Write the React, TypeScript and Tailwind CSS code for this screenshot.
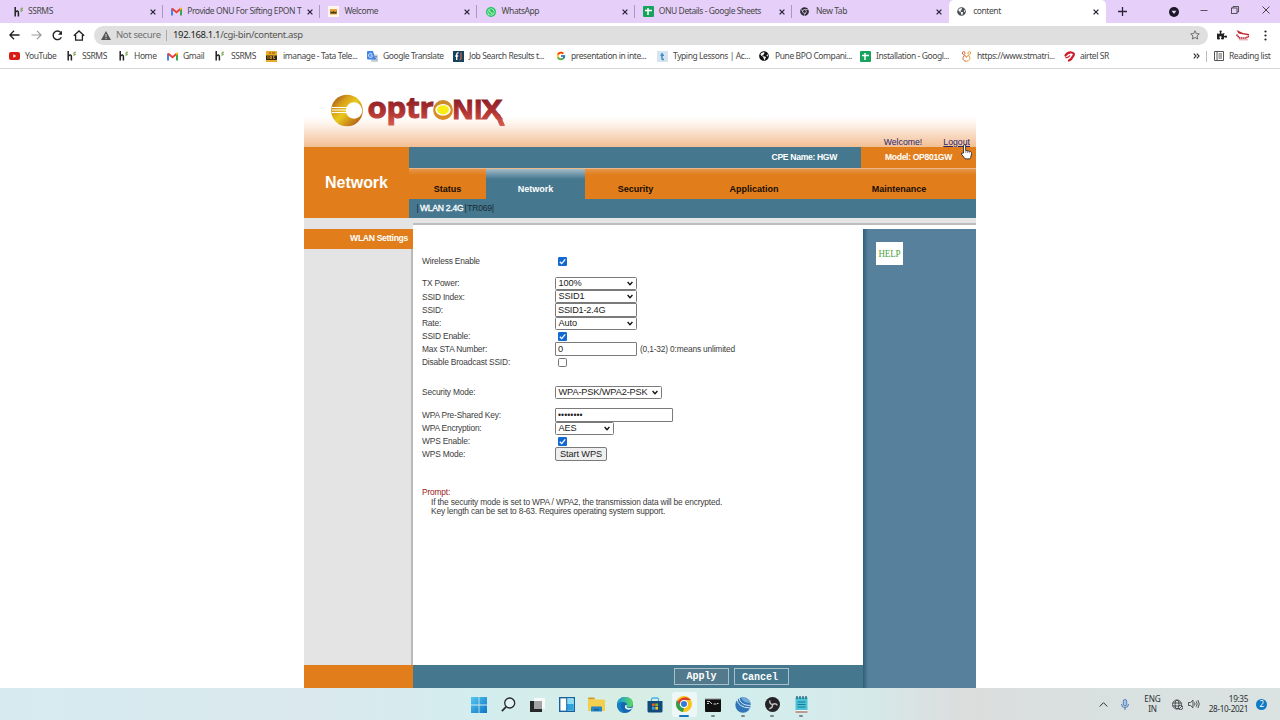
import React from "react";
import { FcGoogle } from "react-icons/fc";
import { FaChrome, FaWhatsapp, FaPuzzlePiece, FaGlobeAmericas } from "react-icons/fa";

type P = { className?: string };

const Hs = () => (
  <svg width="10" height="10" viewBox="0 0 10 10">
    <path d="M1.200 0v9.500M1.500 5q2.700-2.300 2.900.5v4" fill="none" stroke="#222" strokeWidth="1.500" />
    <path d="M9 1.200q-2.300-.4-2.200.9t1.700.9q0 1.600-2.300 1" fill="none" stroke="#6a9a3c" strokeWidth="1" />
  </svg>
);
const Gmail = () => (
  <svg width="11" height="9" viewBox="0 0 11 9">
    <path d="M1 8.500V1.500" stroke="#4285f4" strokeWidth="2" />
    <path d="M10 8.500V1.500" stroke="#34a853" strokeWidth="2" />
    <path d="M1 1.500l4.500 3.800L10 1.500" fill="none" stroke="#ea4335" strokeWidth="2" />
    <path d="M9 1v2.500L11 2V.5z" fill="#fbbc04" />
  </svg>
);
const Imanage = () => (
  <svg width="11" height="11" viewBox="0 0 11 11">
    <rect width="11" height="11" fill="#e8ab2c" />
    <path d="M0 4.500h11v4.500H0z" fill="#33270f" />
    <path d="M3 1h2v2H3zM6 1h3v2H6z" fill="#b57f18" />
    <path d="M2 5v3M4 5.500h1.500v2H4zM9 5H7.500v2.500H9" stroke="#e8ab2c" strokeWidth=".8" fill="none" />
  </svg>
);
const Sheet = () => (
  <svg width="11" height="11" viewBox="0 0 11 11">
    <rect width="11" height="11" rx="1" fill="#17a35b" />
    <path d="M2 4.500h7M5 2v7" stroke="#fff" strokeWidth="1.500" />
  </svg>
);
const Welcome = () => (
  <svg width="11" height="11" viewBox="0 0 11 11">
    <rect width="11" height="11" fill="#fff8ea" />
    <rect x="2" y="3" width="7" height="5.500" fill="#dfa23c" />
    <path d="M2.500 7.500h6V5l-1.500 1.200L5.500 5 4 6.200 2.500 5z" fill="#49330f" />
  </svg>
);
const Whats = () => (
  <span className="flex h-[10px] w-[10px] items-center justify-center rounded-full bg-[#22c55e] text-white">
    <FaWhatsapp size={8} />
  </span>
);
const YouTube = () => (
  <svg width="11" height="8" viewBox="0 0 11 8">
    <rect width="11" height="8" rx="2" fill="#d81a16" />
    <path d="M4.300 2.200v3.600l3-1.800z" fill="#fff" />
  </svg>
);
const Translate = () => (
  <svg width="11" height="11" viewBox="0 0 11 11">
    <rect x="4" y="3.500" width="7" height="7.500" rx="1" fill="#c9d1dc" />
    <path d="M0 1q0-1 1-1h5l2.500 8.500H1q-1 0-1-1z" fill="#4285e8" />
    <path d="M5.700 4.200H3.700M5 3A2 2 0 1 0 5.500 5" fill="none" stroke="#fff" strokeWidth=".8" />
    <path d="M7.500 5.500H10M9.500 5.500L7.500 9M7.700 6.500L9.800 9" stroke="#5f7ba8" strokeWidth=".7" />
  </svg>
);
const JobIcon = () => (
  <svg width="11" height="11" viewBox="0 0 11 11">
    <rect width="11" height="11" fill="#17425e" />
    <path d="M5.500 2Q3.700 1.500 3.700 3.500V9M2.200 5h3" fill="none" stroke="#fff" strokeWidth="1.300" />
    <path d="M8 1.500v6q0 1.500-1.700 1.500" fill="none" stroke="#d7674b" strokeWidth="1.200" />
  </svg>
);
const Typing = () => (
  <svg width="11" height="11" viewBox="0 0 11 11">
    <rect width="11" height="11" fill="#d5e4f0" />
    <path d="M5 2v5.500q0 1.200 2 .9M3.500 4.200h3.500" fill="none" stroke="#3e8dbe" strokeWidth="1.500" />
  </svg>
);
const Stm = () => (
  <svg width="11" height="11" viewBox="0 0 11 11" fill="none" strokeWidth="1">
    <circle cx="2.700" cy="2" r="1.400" stroke="#d8694d" />
    <circle cx="8.300" cy="2" r="1.400" stroke="#e2a23a" />
    <path d="M3 4.500Q.2 9.500 5 10.300M3 4.500q2.500 0 2.500 2" stroke="#d8694d" />
    <path d="M8 4.500q3 5-3 5.800M8 4.500q-2.500 0-2.500 2" stroke="#e2a23a" />
  </svg>
);
const Airtel = () => (
  <svg width="11" height="11" viewBox="0 0 11 11">
    <path d="M1.500 4.500Q3.500 1 7.500 1.500T8.800 5.500Q7.500 8.500 5 9.500" fill="none" stroke="#cf1b2c" strokeWidth="2.200" strokeLinecap="round" />
    <path d="M1.500 6.500q3 .5 4.500-2" fill="none" stroke="#cf1b2c" strokeWidth="1.300" />
  </svg>
);
const Cross = ({ className = "" }: P) => (
  <svg className={"shrink-0 " + className} width="6" height="6" viewBox="0 0 6 6">
    <path d="M.6.6l4.800 4.800M5.400.6L.6 5.400" stroke="#2b2438" strokeWidth="1.300" />
  </svg>
);

const tabs = [
  { icon: <Hs />, label: "SSRMS" },
  { icon: <Gmail />, label: "Provide ONU For Sifting EPON T" },
  { icon: <Welcome />, label: "Welcome" },
  { icon: <Whats />, label: "WhatsApp" },
  { icon: <Sheet />, label: "ONU Details - Google Sheets" },
  { icon: <FaChrome size={9} color="#2c2c34" />, label: "New Tab" },
  { icon: <FaGlobeAmericas size={9} color="#4b5157" />, label: "content" },
];

const bookmarks = [
  { icon: <YouTube />, label: "YouTube", w: "w-[58px]", g: "w-[16px]" },
  { icon: <Hs />, label: "SSRMS", w: "w-[52px]", g: "w-[15px]" },
  { icon: <Hs />, label: "Home", w: "w-[48px]", g: "w-[15px]" },
  { icon: <Gmail />, label: "Gmail", w: "w-[48px]", g: "w-[16px]" },
  { icon: <Hs />, label: "SSRMS", w: "w-[51px]", g: "w-[16px]" },
  { icon: <Imanage />, label: "imanage - Tata Tele...", w: "w-[101px]", g: "w-[17px]" },
  { icon: <Translate />, label: "Google Translate", w: "w-[86px]", g: "w-[16px]" },
  { icon: <JobIcon />, label: "Job Search Results t...", w: "w-[103px]", g: "w-[16px]" },
  { icon: <FcGoogle size={10} />, label: "presentation in inte...", w: "w-[101px]", g: "w-[15px]" },
  { icon: <Typing />, label: "Typing Lessons | Ac...", w: "w-[102px]", g: "w-[16px]" },
  { icon: <FaGlobeAmericas size={10} color="#111" />, label: "Pune BPO Compani...", w: "w-[101px]", g: "w-[16px]" },
  { icon: <Sheet />, label: "Installation - Googl...", w: "w-[101px]", g: "w-[16px]" },
  { icon: <Stm />, label: "https://www.stmatri...", w: "w-[103px]", g: "w-[16px]" },
  { icon: <Airtel />, label: "airtel SR", w: "w-[131px]", g: "w-[16px]" },
];

function Browser() {
  return (
    <header className="h-[69px] border-b border-[#d8d8da] bg-white font-['Noto_Sans',sans-serif] text-[8.500px] tracking-[-0.42px] text-[#484848]">
      <div className="flex h-[23px] bg-[#e6d0fa] pl-[6px]">
        {tabs.map((t, i) => (
          <div
            key={t.label}
            className={
              "flex w-[157.200px] shrink-0 items-center pl-[8px] " +
              (i === 6 ? "rounded-t-[5px] bg-white" : "")
            }
          >
            <span className="flex w-[15px] shrink-0">{t.icon}</span>
            <span className={"w-[116px] shrink-0 whitespace-nowrap " + (i === 0 ? "-ml-px mr-px" : "pl-[1px]")}>{t.label}</span>
            <Cross className="ml-[5px]" />
            {i < 5 && <span className="ml-[6px] h-[13px] w-px bg-[#a999bb]" />}
          </div>
        ))}
        <div className="flex flex-1 items-center">
          <svg className="ml-[12px]" width="9" height="9" viewBox="0 0 9 9"><path d="M4.500 0v9M0 4.500h9" stroke="#2b2438" strokeWidth="1.300" /></svg>
          <svg className="ml-[42px]" width="10" height="10" viewBox="0 0 10 10"><circle cx="5" cy="5" r="5" fill="#1d1827" /><path d="M2.500 3.800h5L5 7z" fill="#e6d0fa" /></svg>
          <svg className="mb-[4px] ml-[21px]" width="8" height="8" viewBox="0 0 8 8"><path d="M.5 4.500h7" stroke="#333" strokeWidth=".8" /></svg>
          <svg className="mb-[4px] ml-[23px]" width="8" height="8" viewBox="0 0 8 8" fill="none" stroke="#333" strokeWidth=".8"><rect x=".5" y="2" width="5.500" height="5.500" /><path d="M2 2V.5h5.500V6H6" /></svg>
          <svg className="mb-[4px] ml-[23px]" width="8" height="8" viewBox="0 0 8 8"><path d="M.5.5l7 7M7.500.5l-7 7" stroke="#333" strokeWidth=".9" /></svg>
        </div>
      </div>
      <div className="flex h-[23px] items-center pt-[1px]">
        <svg className="ml-[9px]" width="11" height="10" viewBox="0 0 11 10"><path d="M5 .8L.9 5 5 9.200M1 5h9.500" fill="none" stroke="#222" strokeWidth="1.300" /></svg>
        <svg className="ml-[11px]" width="11" height="10" viewBox="0 0 11 10"><path d="M6 .8L10.100 5 6 9.200M10 5H.5" fill="none" stroke="#999" strokeWidth="1.200" /></svg>
        <svg className="ml-[10px]" width="11" height="11" viewBox="0 0 11 11"><path d="M9.300 7.300A4.300 4.300 0 1 1 8.700 2.500" fill="none" stroke="#222" strokeWidth="1.400" /><path d="M10 .8v4H6z" fill="#222" /></svg>
        <svg className="ml-[10px]" width="12" height="11" viewBox="0 0 12 11"><path d="M.8 5.700L6 .9l5.200 4.800M2.600 5v5.200h6.800V5" fill="none" stroke="#222" strokeWidth="1.300" /></svg>
        <div className="ml-[9px] flex h-[19px] w-[1114px] items-center rounded-full bg-[#dfdfdf] text-[9.500px] tracking-[-0.360px]">
          <svg className="ml-[7px]" width="10" height="9" viewBox="0 0 10 9"><path d="M5 0l5 9H0z" fill="#555" /><path d="M5 3v3M5 6.800v1.200" stroke="#dfdfdf" /></svg>
          <span className="ml-[5px] w-[50px] whitespace-nowrap text-[#707070]">Not secure</span>
          <span className="h-[11px] w-px bg-[#aaa]" />
          <span className="ml-[6px] flex-1 whitespace-nowrap text-[#555]"><span className="text-[#222]">192.168.1.1</span>/cgi-bin/content.asp</span>
          <svg className="mr-[8px]" width="10" height="10" viewBox="0 0 10 10"><path d="M5 .8l1.300 2.800 3 .3L7 6l.7 3L5 7.500 2.300 9 3 6 .7 3.900l3-.3z" fill="none" stroke="#555" strokeWidth=".8" /></svg>
        </div>
        <FaPuzzlePiece className="ml-[9px]" size={10} color="#222" />
        <svg className="ml-[9px]" width="14" height="12" viewBox="0 0 14 12"><path d="M.5 1l2 3.500L13 6.500V5L7 4z" fill="#c4262e" /><path d="M.5 5.500l3 3.500h6l3.500-1.800" fill="none" stroke="#b72531" strokeWidth="1.700" strokeDasharray="1.500 .4" /><path d="M3 10.800h9" stroke="#d98d8d" strokeWidth=".9" /></svg>
        <svg className="ml-[14px]" width="3" height="11" viewBox="0 0 3 11" fill="#222"><circle cx="1.500" cy="1.500" r="1.100" /><circle cx="1.500" cy="5.500" r="1.100" /><circle cx="1.500" cy="9.500" r="1.100" /></svg>
      </div>
      <div className="flex h-[20px] items-center pl-[9px]">
        {bookmarks.map((b, i) => (
          <div key={i} className={"flex shrink-0 items-center " + b.w}>
            <span className={"flex shrink-0 " + b.g}>{b.icon}</span>
            <span className="whitespace-nowrap">{b.label}</span>
          </div>
        ))}
        <svg className="-ml-[2px] shrink-0" width="7" height="6" viewBox="0 0 7 6"><path d="M.8.6L3 3 .8 5.400M3.800.6L6 3 3.800 5.400" fill="none" stroke="#222" strokeWidth="1.100" /></svg>
        <span className="ml-[6px] h-[11px] w-px bg-[#bbb]" />
        <svg className="ml-[7px] shrink-0" width="10" height="10" viewBox="0 0 10 10"><path d="M.5.5h9v9h-9zM3 .5v9M4.500 3H8M4.500 5H8M4.500 7H8" fill="none" stroke="#444" strokeWidth=".9" /></svg>
        <span className="ml-[5px] whitespace-nowrap">Reading list</span>
      </div>
    </header>
  );
}

function Logo() {
  return (
    <svg className="overflow-visible" width="180" height="40" viewBox="328 90 180 40">
      <defs>
        <linearGradient id="coin" x1="0" y1="0" x2="1" y2="1">
          <stop offset="0" stopColor="#8c3d14" /><stop offset=".3" stopColor="#d9a01c" /><stop offset=".5" stopColor="#e8c81c" /><stop offset=".75" stopColor="#c98418" /><stop offset="1" stopColor="#9a3c14" />
        </linearGradient>
        <linearGradient id="red" gradientUnits="userSpaceOnUse" x1="0" y1="97" x2="0" y2="127">
          <stop offset="0" stopColor="#861a24" /><stop offset=".5" stopColor="#b03433" /><stop offset="1" stopColor="#d9604e" />
        </linearGradient>
        <linearGradient id="gold" x1="0" y1="0" x2="0" y2="1">
          <stop offset="0" stopColor="#c98b2a" /><stop offset="1" stopColor="#e08a25" />
        </linearGradient>
      </defs>
      <circle cx="347" cy="110.500" r="15.800" fill="url(#coin)" />
      <circle cx="354" cy="110.500" r="8.200" fill="#fff" />
      <path d="M332 107.500h15M332 110h15M332 112.500h15" stroke="#fff" strokeWidth="1" />
      <g fill="url(#red)" stroke="url(#red)" strokeWidth="1" fontFamily="'Open Sans',sans-serif" fontWeight="700">
        <text x="367.500" y="118" fontSize="28.500" textLength="66" lengthAdjust="spacingAndGlyphs">optr</text>
        <text x="452" y="118.500" fontSize="26" textLength="30.500" lengthAdjust="spacingAndGlyphs">NI</text>
        <text x="481.500" y="118.500" fontSize="26" textLength="20.500" lengthAdjust="spacingAndGlyphs">X</text>
        <path d="M495 113l5 12.500h4.500l-5-11z" />
      </g>
      <ellipse cx="443" cy="110" rx="9.900" ry="10" fill="url(#gold)" />
      <ellipse cx="443" cy="109.800" rx="7.700" ry="5.900" fill="#fff" />
      <ellipse cx="443" cy="109.800" rx="6" ry="4.600" fill="#f8ee13" />
    </svg>
  );
}

function Select({ value, w }: { value: string; w: string }) {
  return (
    <div className={"grid items-center rounded-[1.500px] border border-[#7b7b7b] bg-white h-[13px] " + w}>
      <span className="col-start-1 row-start-1 whitespace-nowrap pl-[2.500px] text-[9.200px] leading-[11px] tracking-[-0.120px] text-[#222]">{value}</span>
      <svg className="col-start-1 row-start-1 mr-[3px] justify-self-end" width="6" height="5" viewBox="0 0 6 5"><path d="M.6 1L3 3.600 5.400 1" fill="none" stroke="#111" strokeWidth="1.400" /></svg>
    </div>
  );
}
function Field({ value, w, small = false }: { value: string; w: string; small?: boolean }) {
  return (
    <input
      readOnly
      value={value}
      className={"h-[14px] rounded-[1px] border border-[#7b7b7b] bg-white px-[2px] text-[#222] outline-none " + w + (small ? " text-[8.500px] tracking-[0.100px]" : " text-[9.200px] tracking-[-0.220px]")}
    />
  );
}
function Check({ on = true }: { on?: boolean }) {
  return (
    <svg className="ml-[3px]" width="9" height="9" viewBox="0 0 9 9">
      {on ? (
        <>
          <rect width="9" height="9" rx="1.300" fill="#1268d3" />
          <path d="M1.800 4.700l1.900 1.900L7.200 2.300" fill="none" stroke="#fff" strokeWidth="1.300" />
        </>
      ) : (
        <rect x=".5" y=".5" width="8" height="8" rx="1.300" fill="#fff" stroke="#767676" />
      )}
    </svg>
  );
}
function Row({ label, children }: { label: string; children: React.ReactNode }) {
  return (
    <div className="flex h-[13.150px] items-center whitespace-nowrap">
      <span className="w-[133px] shrink-0">{label}</span>
      {children}
    </div>
  );
}

function Router() {
  return (
    <main className="mx-auto h-[619px] w-[672px] font-['Liberation_Sans',sans-serif] text-[8.400px] tracking-[-0.180px] text-[#3c3c3c]">
      <div className="flex h-[78px] justify-between bg-[linear-gradient(to_bottom,#fff_0px,#fff_48px,#fdf1e8_56px,#f2bf93_78px)]">
        <div className="pl-[24px] pt-[21px]"><Logo /></div>
        <div className="flex items-end pr-[6px] text-[8.700px] leading-[10px] tracking-[0.020px] text-[#26266e]">
          <span className="mr-[21px]">Welcome!</span>
          <span className="underline">Logout</span>
        </div>
      </div>
      <div className="flex h-[71px]">
        <div className="flex w-[105px] shrink-0 items-center justify-center bg-[#e17e1b] text-[16px] font-bold tracking-[-0.050px] text-white">Network</div>
        <div className="flex-1">
          <div className="flex h-[21px] text-[8.600px] font-bold tracking-[-0.330px] text-white">
            <div className="flex w-[452px] items-center justify-end bg-[#45788f] pr-[24px]">CPE Name: HGW</div>
            <div className="flex flex-1 items-center bg-[#e17e1b] pl-[24px]">Model: OP801GW</div>
          </div>
          <div className="flex h-[31px] border-t border-[#e9b98c] bg-[linear-gradient(to_bottom,#e8954a,#e17e1b_6px)] text-[9px] font-bold leading-[10px] tracking-[0.020px] text-[#160d04]">
            <div className="w-[77px] pt-[15px] text-center">Status</div>
            <div className="w-[99px] bg-[linear-gradient(to_bottom,#a5bdc9,#45788f_10px)] pt-[15px] text-center text-white">Network</div>
            <div className="w-[101px] pt-[15px] text-center">Security</div>
            <div className="w-[136px] pt-[15px] text-center">Application</div>
            <div className="w-[154px] pt-[15px] text-center">Maintenance</div>
          </div>
          <div className="flex h-[19px] items-center bg-[#45788f] pl-[7.500px] text-[8.600px] tracking-[-0.270px] text-[#1b2b33]">
            <span>|</span><span className="pl-[1.500px] text-white [-webkit-text-stroke:0.300px_white]">WLAN 2.4G</span><span className="pl-px">|</span><span className="pl-px">TR069</span><span>|</span>
          </div>
        </div>
      </div>
      <div className="flex h-[470px]">
        <aside className="flex w-[109px] shrink-0 flex-col bg-[#e4e4e4]">
          <div className="mt-[11px] flex h-[20px] items-center justify-end bg-[#e17e1b] pb-[2px] pr-[5px] text-[8.600px] font-bold tracking-[-0.320px] text-white">WLAN Settings</div>
          <div className="flex-1 border-r-2 border-[#b9b9b9]" />
          <div className="h-[23px] bg-[#e17e1b]" />
        </aside>
        <div className="flex flex-1 flex-col">
          <div className="h-[7px] border-b-2 border-[#bdbdbd] bg-[#e4e4e4]" />
          <div className="flex flex-1">
            <div className="flex w-[450px] flex-col">
              <div className="flex-1 bg-white pl-[9px] pt-[30px]">
                <Row label="Wireless Enable"><Check /></Row>
                <div className="mt-[9px]">
                  <Row label="TX Power:"><Select value="100%" w="w-[82px]" /></Row>
                  <Row label="SSID Index:"><Select value="SSID1" w="w-[82px]" /></Row>
                  <Row label="SSID:"><Field value="SSID1-2.4G" w="w-[82px]" /></Row>
                  <Row label="Rate:"><Select value="Auto" w="w-[82px]" /></Row>
                  <Row label="SSID Enable:"><Check /></Row>
                  <Row label="Max STA Number:"><Field value="0" w="w-[82px]" /><span className="ml-[3px]">(0,1-32) 0:means unlimited</span></Row>
                  <Row label="Disable Broadcast SSID:"><Check on={false} /></Row>
                </div>
                <div className="mt-[17px]"><Row label="Security Mode:"><Select value="WPA-PSK/WPA2-PSK" w="w-[107px]" /></Row></div>
                <div className="mt-[9.100px]">
                  <Row label="WPA Pre-Shared Key:"><Field value="••••••••" w="w-[118px]" small /></Row>
                  <Row label="WPA Encryption:"><Select value="AES" w="w-[59px]" /></Row>
                  <Row label="WPS Enable:"><Check /></Row>
                  <Row label="WPS Mode:"><button className="h-[14px] w-[52px] shrink-0 rounded-[2px] border border-[#7b7b7b] bg-[#efefef] text-[9.200px] leading-[12px] tracking-[-0.120px] text-[#222]">Start WPS</button></Row>
                </div>
                <div className="mt-[27.200px] leading-[9.400px]">
                  <div className="text-[#9c1c22]">Prompt:</div>
                  <div className="pl-[9px]">If the security mode is set to WPA / WPA2, the transmission data will be encrypted.</div>
                  <div className="pl-[9px]">Key length can be set to 8-63. Requires operating system support.</div>
                </div>
              </div>
              <div className="flex h-[23px] items-center justify-end gap-[5px] bg-[#45788f] pr-[74px] font-['Liberation_Mono',monospace] text-[10px] font-bold tracking-normal text-white">
                <div className="flex h-[17px] w-[55px] items-center justify-center border border-[#a9bfc9] bg-[#52798c]">Apply</div>
                <div className="flex h-[17px] w-[55px] items-center justify-center border border-[#a9bfc9] pr-[3px] pt-[2px]">Cancel</div>
              </div>
            </div>
            <div className="mt-[4px] flex-1 bg-[linear-gradient(to_right,#2f5f7a,#3f6b86_2px,#56809b_5px)] pl-[13px] pt-[13px]">
              <div className="flex h-[23px] w-[27px] items-center justify-center bg-white font-['Liberation_Serif',serif] text-[11px] text-[#4da33c]"><span className="scale-x-[0.820]">HELP</span></div>
            </div>
          </div>
        </div>
      </div>
    </main>
  );
}

const Cell = ({ children, dot = false }: { children: React.ReactNode; dot?: boolean }) => (
  <div className="flex w-[29.350px] flex-col items-center pt-[7px]">
    <div className="flex h-[19px] items-center">{children}</div>
    {dot && <span className="mt-px h-[2px] w-[4px] rounded-full bg-[#7e8789]" />}
  </div>
);

function Taskbar() {
  return (
    <footer className="flex h-[32px] bg-[linear-gradient(to_right,#d6ebf0_0%,#dbe9ee_24%,#d3edee_38%,#d8eee4_49%,#d3eeee_58%,#d6e9e9_68%,#dcdddd_75%,#d9e0e0_85%,#dbe2e2_100%)] font-['Noto_Sans',sans-serif] text-[8.200px] tracking-[-0.350px] text-[#2c3133]">
      <div className="flex w-[642px] shrink-0 pl-[464px]">
        <div className="flex">
          <Cell><svg width="16" height="16" viewBox="0 0 16 16"><defs><linearGradient id="win" x1="0" y1="0" x2="1" y2="1"><stop stopColor="#54c8f0" /><stop offset="1" stopColor="#0f74c8" /></linearGradient></defs><path d="M0 0h7.600v7.600H0zM8.400 0H16v7.600H8.400zM0 8.400h7.600V16H0zM8.400 8.400H16V16H8.400z" fill="url(#win)" /></svg></Cell>
          <Cell><svg width="15" height="15" viewBox="0 0 15 15"><circle cx="8.700" cy="6" r="5" fill="#e2f1f3" stroke="#25292b" strokeWidth="1.300" /><path d="M5 9.800L.9 14.100" stroke="#25292b" strokeWidth="1.700" /></svg></Cell>
          <Cell><svg width="15" height="16" viewBox="0 0 15 16"><rect x="4" y="1" width="11" height="11" fill="#f8fafa" /><rect x="0" y="4" width="12" height="11" fill="#252729" /><path d="M4 4h8v8H4z" fill="#a1a3a5" /></svg></Cell>
          <Cell><svg width="16" height="15" viewBox="0 0 16 15"><rect x=".7" y=".7" width="14.600" height="13.600" fill="#fff" stroke="#17629c" strokeWidth="1.400" /><path d="M8 1.400h6.600v6H8z" fill="#8bddf5" /><path d="M8 7h6.600v6.600H8z" fill="#2ba3df" /><path d="M7.700 1v13" stroke="#17629c" /></svg></Cell>
          <Cell><svg width="17" height="15" viewBox="0 0 17 15"><path d="M0 1.500Q0 .5 1 .5h5l1.500 2H0z" fill="#d49a19" /><path d="M0 2.500h16q1 0 1 1V14H0z" fill="#f4cf4e" /><path d="M3 14.500v-4q0-1 1-1h9q1 0 1 1v4z" fill="#2384c6" /><path d="M6 12h5v1.500H6z" fill="#16609b" /></svg></Cell>
          <Cell><svg width="16" height="16" viewBox="0 0 16 16"><defs><linearGradient id="edge"><stop stopColor="#1798dc" /><stop offset="1" stopColor="#5edb5c" /></linearGradient></defs><circle cx="8" cy="8" r="8" fill="#1267b0" /><path d="M0 8Q.5 0 8 0q8 .3 8 6.500 0 4-4.500 4Q8.800 10.300 10 8q0-2.500-3.500-3Q2 4.700 0 8z" fill="url(#edge)" /><path d="M10 8q-1.500 2.700 1.500 3 2.500.3 4-.8l-.8 1.600q-3 1.500-5.200.5T8 9q.3-1.500 2-1z" fill="#e6f5f5" /><path d="M0 8q2-3.300 5.500-3Q1.500 10 7.500 16 .5 15.500 0 8z" fill="#127fc5" /></svg></Cell>
          <Cell><svg width="16" height="16" viewBox="0 0 16 16"><path d="M4.500 4.500v-2q0-1.500 1.500-1.500h4q1.500 0 1.500 1.500v2" fill="none" stroke="#42b2e3" strokeWidth="1.300" /><path d="M.5 4h15v10q0 1.500-1.500 1.500H2Q.5 15.500.5 14z" fill="#134b78" /><path d="M5 6.500h2.700v2.700H5z" fill="#f15b2a" /><path d="M8.300 6.500H11v2.700H8.300z" fill="#7fba25" /><path d="M5 9.900h2.700v2.700H5z" fill="#2ba7e8" /><path d="M8.300 9.900H11v2.700H8.300z" fill="#fbc31b" /></svg></Cell>
          <div className="flex w-[29.350px] justify-center">
            <div className="mt-[4px] flex h-[25px] w-[25px] flex-col items-center rounded-[3px] bg-[#edf7f8] pt-[4px]">
              <svg className="shrink-0" width="16" height="16" viewBox="0 0 16 16"><circle cx="8" cy="8" r="8" fill="#f9c51c" /><path d="M8 8H1.100A8 8 0 0 1 14.900 4H8z" fill="#e03c2e" /><path d="M1.100 4L4.500 10 8 12l-1 4A8 8 0 0 1 1.100 4z" fill="#2c9f50" /><circle cx="8" cy="8" r="3.900" fill="#fff" /><circle cx="8" cy="8" r="3" fill="#3578dc" /></svg>
              <span className="mt-[3px] h-[2px] w-[10px] shrink-0 rounded-full bg-[#1675c0]" />
            </div>
          </div>
          <Cell dot><svg width="16" height="14" viewBox="0 0 16 14"><rect width="16" height="14" rx="1" fill="#111" /><path d="M0 .7h16" stroke="#b9bcbd" strokeWidth="1.400" /><path d="M2 3.500h3M2 5.500h2M5 4l2 2M8.500 6h3M12 5.500h1.500" stroke="#e5e5e5" strokeWidth=".9" /></svg></Cell>
          <Cell dot><svg width="16" height="16" viewBox="0 0 16 16"><circle cx="8" cy="8" r="7.700" fill="#3176b8" /><path d="M2 1.500Q2.500 10.500 15 11M4 .8Q5 8.500 15.600 8.500" fill="none" stroke="#d5e9f7" strokeWidth="1" /><path d="M6 .5Q8 6 15.800 6 14 .5 6 .5z" fill="#77a9d8" /></svg></Cell>
          <Cell dot><svg width="15" height="15" viewBox="0 0 16 16"><circle cx="8" cy="8" r="8" fill="#252325" /><path d="M7.800 8Q4.500 7 5.200 3.500M8 8q3.500-1.800 5.200 1M8 8q.5 3.700-3.500 4.500" fill="none" stroke="#c3c3c3" strokeWidth="1.500" /></svg></Cell>
          <Cell dot><svg width="13" height="17" viewBox="0 0 13 17"><rect x=".5" y="1.500" width="12" height="13" fill="#4dc3d7" /><path d="M2 0v3M5 0v3M8 0v3M11 0v3" stroke="#164b67" strokeWidth="1.200" /><path d="M2.500 6h8M2.500 8.500h8M2.500 11h8" stroke="#187a98" /><path d="M.5 14h12v1.200H.5z" fill="#f0f5f5" /><path d="M.5 15.500h12v1H.5z" fill="#a54932" /></svg></Cell>
        </div>
      </div>
      <div className="ml-auto flex items-center pr-[13px]">
        <svg width="9" height="5" viewBox="0 0 9 5"><path d="M.7 4.500l3.800-3.800 3.800 3.800" fill="none" stroke="#2c3133" strokeWidth="1" /></svg>
        <svg className="ml-[13px]" width="8" height="11" viewBox="0 0 8 11"><rect x="2.300" y=".5" width="3.400" height="6.300" rx="1.700" fill="#a9c7e8" stroke="#3a6fb0" strokeWidth=".8" /><path d="M.5 5q0 3.500 3.500 3.500T7.500 5M4 8.500V11" fill="none" stroke="#3a6fb0" strokeWidth=".9" /></svg>
        <div className="ml-[15px] w-[17px] text-center leading-[10.500px]"><div className="tracking-[-0.100px]">ENG</div><div>IN</div></div>
        <svg className="ml-[11px]" width="11" height="11" viewBox="0 0 11 11" fill="none" stroke="#2c3133" strokeWidth=".8"><circle cx="5" cy="5.500" r="4.500" /><ellipse cx="5" cy="5.500" rx="2" ry="4.500" /><path d="M.8 4h8.600M.8 7h8" /><circle cx="8.500" cy="8.500" r="2.200" fill="#dbe2e2" /><path d="M7 10l3-3" /></svg>
        <svg className="ml-[5px]" width="12" height="10" viewBox="0 0 12 10" fill="none" stroke="#2c3133" strokeWidth=".8"><path d="M.5 3.500h2L5 1.200v7.600L2.500 6.500h-2zM6.500 3.500q1 1.500 0 3M8.200 2.300q2 2.700 0 5.400M9.800 1q3 4 0 8" /></svg>
        <div className="ml-[8px] w-[40px] whitespace-nowrap text-right leading-[10.500px]"><div>19:35</div><div>28-10-2021</div></div>
        <span className="ml-[8px] flex h-[11px] w-[11px] items-center justify-center rounded-full bg-[#0f7bc4] text-[8px] text-white">2</span>
      </div>
    </footer>
  );
}

export default function App() {
  return (
    <div className="relative h-[720px] w-[1280px] overflow-hidden bg-white">
      <Browser />
      <Router />
      <Taskbar />
      <svg className="absolute left-[960px] top-[144px]" width="13" height="17" viewBox="0 0 12 16">
        <path d="M3.200 8.500V1.800q0-1.100 1-1.100t1 1.100V6l1.500.3 1.500.4 1.700.5q1 .5.900 1.800L10 12.500l-.8 1.500H4.700L1.200 9.500q-.3-1.200 1-.8z" fill="#fff" stroke="#222" strokeWidth=".8" />
        <path d="M5.300 6v2.500M7 6.500v2M8.600 7v1.700" stroke="#555" strokeWidth=".6" />
      </svg>
    </div>
  );
}
